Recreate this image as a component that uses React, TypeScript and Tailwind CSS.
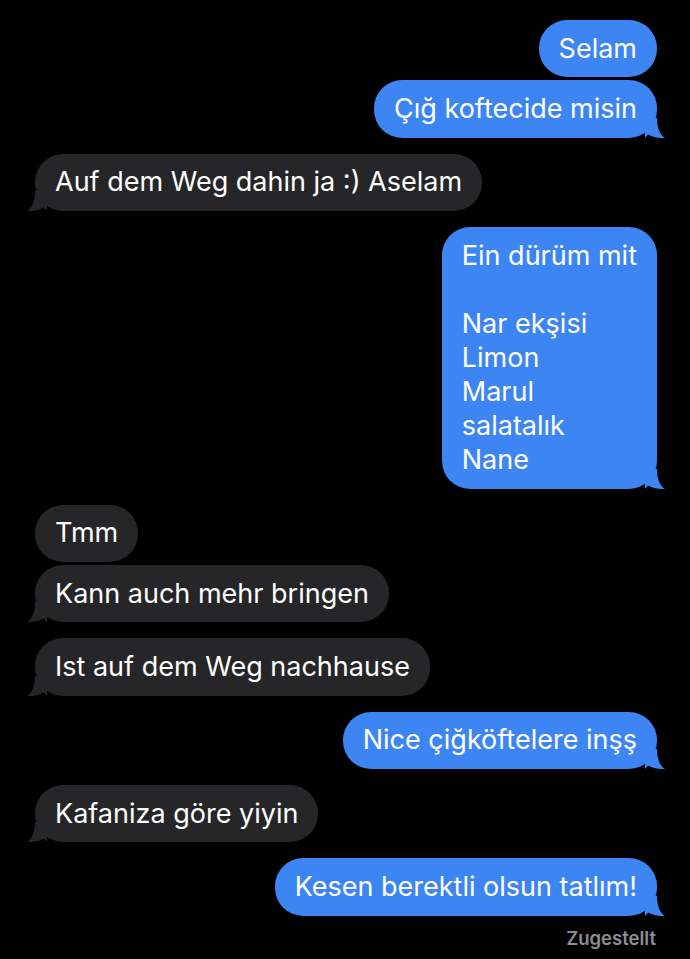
import React from 'react';

type Msg = { text: string; me: boolean; tail: boolean; gap: 'group' | 'tight' };

const messages: Msg[] = [
  { text: 'Selam', me: true, tail: false, gap: 'group' },
  { text: 'Çığ koftecide misin', me: true, tail: true, gap: 'tight' },
  { text: 'Auf dem Weg dahin ja :) Aselam', me: false, tail: true, gap: 'group' },
  { text: 'Ein dürüm mit\n\nNar ekşisi\nLimon\nMarul\nsalatalık\nNane', me: true, tail: true, gap: 'group' },
  { text: 'Tmm', me: false, tail: false, gap: 'group' },
  { text: 'Kann auch mehr bringen', me: false, tail: true, gap: 'tight' },
  { text: 'Ist auf dem Weg nachhause', me: false, tail: true, gap: 'group' },
  { text: 'Nice çiğköftelere inşş', me: true, tail: true, gap: 'group' },
  { text: 'Kafaniza göre yiyin', me: false, tail: true, gap: 'group' },
  { text: 'Kesen berektli olsun tatlım!', me: true, tail: true, gap: 'group' },
];

function Tail({ me }: { me: boolean }) {
  // little iMessage tail at the bottom corner
  if (me) {
    return (
      <svg
        className="absolute bottom-0 right-[-8px] h-[20px] w-[20px]"
        viewBox="0 0 20 20"
      >
        <path d="M0 0 H12 C12 10 15 17 20 20 C14 20.4 8 19.2 3 16.5 C2 18 1 19 0 20 Z" fill="#3d85f3" />
      </svg>
    );
  }
  return (
    <svg
      className="absolute bottom-0 left-[-8px] h-[20px] w-[20px]"
      viewBox="0 0 20 20"
    >
      <path d="M20 0 H8 C8 10 5 17 0 20 C6 20.4 12 19.2 17 16.5 C18 18 19 19 20 20 Z" fill="#262628" />
    </svg>
  );
}

function Bubble({ msg, first }: { msg: Msg; first: boolean }) {
  const spacing = first ? '' : msg.gap === 'tight' ? 'mt-[3px]' : 'mt-4';
  return (
    <div className={`flex ${msg.me ? 'justify-end' : 'justify-start'} ${spacing}`}>
      <div
        className={`relative max-w-[80%] whitespace-pre-line rounded-[28px] px-5 py-[11.7px] text-[27px] leading-[34px] text-white ${
          msg.me ? 'bg-[#3d85f3]' : 'bg-[#262628]'
        }`}
      >
        {msg.tail && <Tail me={msg.me} />}
        <span className="relative">{msg.text}</span>
      </div>
    </div>
  );
}

export default function App() {
  return (
    <div
      className="min-h-screen w-full overflow-hidden bg-black pl-[35px] pr-[33px] pt-5"
      style={{ fontFamily: 'Inter, "Noto Sans", "Liberation Sans", sans-serif' }}
    >
      {messages.map((m, i) => (
        <Bubble key={i} msg={m} first={i === 0} />
      ))}
      <div className="mt-[9px] pr-[1px] text-right text-[18.5px] font-semibold text-[#8d8d92]">
        Zugestellt
      </div>
    </div>
  );
}
